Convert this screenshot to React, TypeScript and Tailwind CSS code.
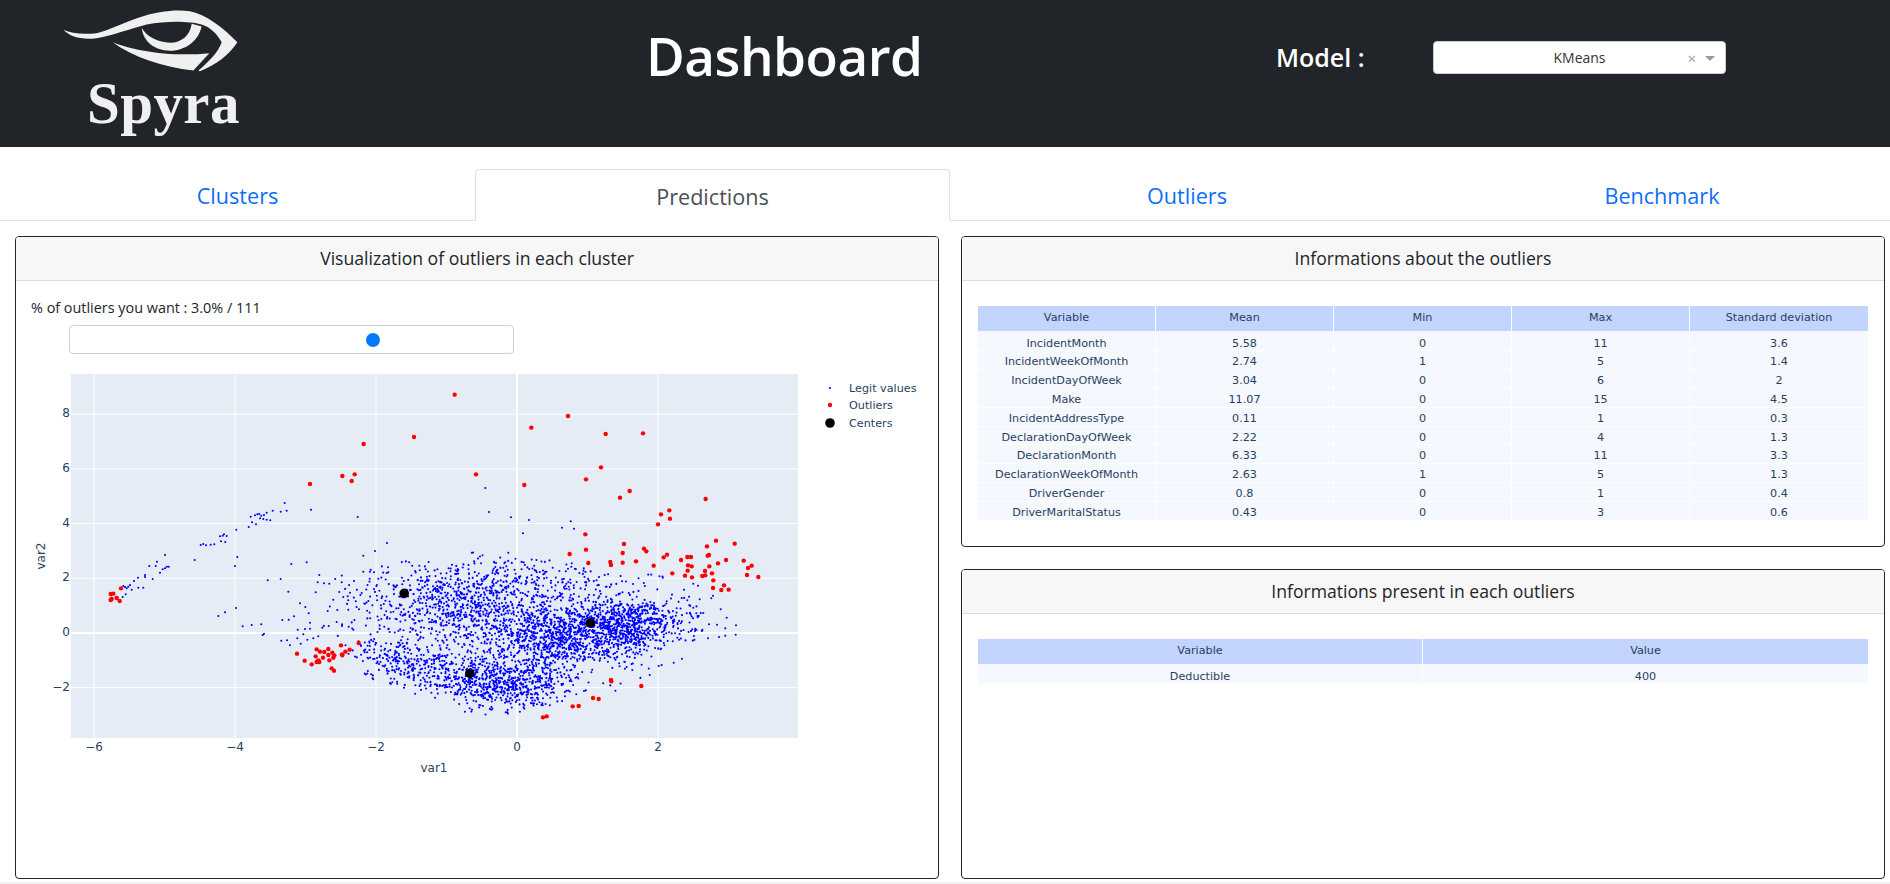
import React from "react";

const sans = "font-['Open_Sans',sans-serif]";

function rng(seed: number) {
  let s = seed >>> 0;
  return () => {
    s = (s + 0x6d2b79f5) >>> 0;
    let t = s;
    t = Math.imul(t ^ (t >>> 15), t | 1);
    t ^= t + Math.imul(t ^ (t >>> 7), t | 61);
    return ((t ^ (t >>> 14)) >>> 0) / 4294967296;
  };
}

const X0 = 517;
const Y0 = 632;
const SX = 70.5;
const SY = 27.35;
const OX = 71;
const OY = 373;
const px = (x: number) => X0 + x * SX - OX;
const py = (y: number) => Y0 - y * SY - OY;

const leftReds = [[1184,101],[1062,228],[911,249],[1248,340],[847,345],[884,340],[875,360],[750,369],[183,682],[152,699],[160,698],[170,711],[152,717],[155,714],[179,720],[711,878],[734,899],[755,910],[770,865],[780,872],[793,873],[805,864],[767,886],[805,882],[817,875],[823,883],[820,890],[808,898],[789,890],[770,903],[775,898],[778,903],[843,853],[846,880],[847,883],[856,872],[869,866],[896,846],[815,922],[822,929]];
const rightReds = [[204,165],[94,200],[317,219],[429,217],[303,319],[258,355],[73,372],[389,390],[360,410],[617,414],[508,448],[483,460],[510,473],[474,490],[256,520],[372,549],[648,539],[621,556],[704,548],[432,563],[439,571],[258,566],[209,579],[368,576],[501,581],[491,589],[562,588],[573,588],[627,582],[623,584],[543,597],[678,597],[731,599],[408,601],[331,603],[333,612],[368,605],[265,606],[654,607],[564,613],[575,616],[628,616],[461,614],[755,614],[744,621],[563,629],[615,630],[517,637],[636,637],[741,642],[555,644],[607,645],[616,643],[576,649],[775,648],[640,658],[672,673],[639,681],[664,687],[686,686],[333,957],[334,961],[424,975],[279,1011],[296,1014],[218,1036],[236,1035],[140,1066],[129,1069]];
const leftBlue = [[315,582],[291,602],[268,615],[287,615],[255,642],[255,648],[234,650],[222,660],[210,672],[205,677],[200,682],[195,678],[190,675],[197,700],[188,708],[215,686],[235,680],[250,680],[278,654],[300,635],[308,625],[315,622],[320,617],[326,617],[404,597],[422,552],[430,549],[438,553],[452,551],[463,550],[483,541],[492,520],[480,526],[488,524],[500,525],[496,543],[529,506],[566,498],[576,484],[588,490],[572,467],[585,463],[592,460],[598,459],[604,464],[612,462],[620,455],[600,472],[610,474],[620,476],[631,478],[638,449],[662,452],[674,426],[680,449],[753,446],[893,468],[1276,381],[1287,453],[525,615],[532,588],[694,609],[740,604],[623,658],[662,654],[685,692],[475,765],[495,754],[528,741],[548,796],[575,792],[604,790],[608,822],[612,818],[720,727],[736,738],[746,757],[667,777],[686,776],[702,766],[664,839],[681,838],[690,853],[981,546],[945,570],[910,584],[778,642],[773,664],[792,667],[808,668],[767,694],[803,750],[832,747],[750,785],[787,800],[806,795],[830,783],[846,795],[713,806],[735,804],[750,803],[730,820],[712,832],[722,848],[742,836],[760,832],[775,826],[820,716],[850,708],[865,718],[838,693],[870,695],[882,660],[845,664],[910,632],[932,626],[942,634]];
const rightBlue = [[33,469],[87,477],[69,517],[186,500],[212,481],[222,503],[25,575],[66,603],[214,617],[158,620],[708,793],[707,821],[680,770],[662,745],[676,802],[676,824],[657,828],[651,791],[627,790],[624,832],[546,893],[521,905],[476,915],[449,942],[397,927],[252,990],[229,1000],[594,674],[580,668],[552,686],[634,712],[639,704],[599,715],[610,756],[593,769],[568,732],[580,740]];

const reds = [
  ...leftReds.map(([a, b]) => [60 + a / 3 - OX, 360 + b / 3 - OY]),
  ...rightReds.map(([a, b]) => [500 + a / 3 - OX, 360 + b / 3 - OY]),
];

function blueDots(): string {
  const r = rng(4242);
  const gauss = () => {
    const u = Math.max(r(), 1e-6);
    return Math.sqrt(-2 * Math.log(u)) * Math.cos(2 * Math.PI * r());
  };
  let d = "";
  const add = (x: number, y: number) => {
    d += `M${x.toFixed(1)} ${y.toFixed(1)}h0`;
  };
  leftBlue.forEach(([a, b]) => add(60 + a / 3 - OX, 360 + b / 3 - OY));
  rightBlue.forEach(([a, b]) => add(500 + a / 3 - OX, 360 + b / 3 - OY));
  const keep = (x: number, y: number) => {
    if (x < -2.75 || x > 2.65) return false;
    const top = 3.0 - 0.35 * Math.abs(x + 0.5);
    const bot = -3.0 + Math.max(0, (x - 0.3) * 0.75) + Math.max(0, (-0.9 - x) * 1.05);
    if (y > top || y < bot) return false;
    if (x > 2.1 && (y > 1.5 || y < -0.3)) return false;
    return true;
  };
  const groups: [number, number, number, number, number][] = [
    [1150, 0.85, -0.05, 0.68, 0.55],
    [850, -0.7, 0.95, 0.75, 0.75],
    [430, 1.7, 0.45, 0.4, 0.5],
    [300, 0, 1.95, 1.05, 0.55],
    [230, 0.2, -1.25, 0.5, 0.65],
    [230, -0.3, -1.95, 0.45, 0.48],
  ];
  for (const [n, cx, cy, sx, sy] of groups) {
    for (let i = 0; i < n; i++) {
      const x = cx + gauss() * sx;
      const y = cy + gauss() * sy;
      if (keep(x, y)) add(px(x), py(y));
    }
  }
  for (let i = 0; i < 660; i++) {
    const t = r();
    const x = -2.2 + 2.6 * t + gauss() * 0.18;
    const y = -0.8 - 1.25 * t + gauss() * 0.45;
    if (keep(x, y)) add(px(x), py(y));
  }
  return d;
}

function Scatter() {
  const W = 727;
  const H = 364;
  const xt = [-6, -4, -2, 0, 2];
  const yt = [-2, 0, 2, 4, 6, 8];
  const lab = "#2a3f5f";
  const font = "'DejaVu Sans', sans-serif";
  const dots = React.useMemo(blueDots, []);
  return (
    <svg width={895} height={430} viewBox="-40 -13 895 430" className="block">
      <rect x={0} y={0} width={W} height={H} fill="#e5ecf6" />
      {xt.map((t) => (
        <line key={t} x1={px(t)} x2={px(t)} y1={0} y2={H} stroke="#fff" strokeWidth={t === 0 ? 2 : 1} />
      ))}
      {yt.map((t) => (
        <line key={t} x1={0} x2={W} y1={py(t)} y2={py(t)} stroke="#fff" strokeWidth={t === 0 ? 2 : 1} />
      ))}
      <path d={dots} stroke="#0000ff" strokeWidth={2.1} strokeLinecap="round" fill="none" />
      {reds.map(([x, y], i) => (
        <circle key={i} cx={x} cy={y} r={2.2} fill="#ff0000" />
      ))}
      {[[-1.6, 1.45], [-0.67, -1.48], [1.04, 0.36]].map(([x, y], i) => (
        <circle key={i} cx={px(x)} cy={py(y)} r={4.8} fill="#000" />
      ))}
      {xt.map((t) => (
        <text key={t} x={px(t)} y={H + 13} textAnchor="middle" fontSize={12} fontFamily={font} fill={lab}>
          {t < 0 ? `\u2212${-t}` : t}
        </text>
      ))}
      {yt.map((t) => (
        <text key={t} x={-1} y={py(t) + 3} textAnchor="end" fontSize={12} fontFamily={font} fill={lab}>
          {t < 0 ? `\u2212${-t}` : t}
        </text>
      ))}
      <text x={363} y={H + 34} textAnchor="middle" fontSize={12} fontFamily={font} fill={lab}>var1</text>
      <text transform="translate(-26 182) rotate(-90)" textAnchor="middle" fontSize={12} fontFamily={font} fill={lab}>var2</text>
      {[
        { t: "Legit values", y: 14, r: 1.1, c: "#0000ff" },
        { t: "Outliers", y: 31, r: 2.2, c: "#ff0000" },
        { t: "Centers", y: 49, r: 4.8, c: "#000" },
      ].map((l) => (
        <g key={l.t}>
          <circle cx={759} cy={l.y} r={l.r} fill={l.c} />
          <text x={778} y={l.y + 3.5} fontSize={11.2} fontFamily={font} fill={lab}>{l.t}</text>
        </g>
      ))}
    </svg>
  );
}

function Logo() {
  return (
    <div className="pt-[7px]">
      <svg width={180} height={67} viewBox="180 20 540 200" className="block">
        <path fill="#f0f0f0" d="M190 88 C215 100 250 102 290 98 C330 88 380 62 420 50 C470 32 530 26 570 32 C620 42 670 82 712 125 C690 160 650 192 600 212 L595 210 C625 185 655 155 665 125 C650 98 630 80 605 72 C570 62 500 60 440 72 C390 84 340 105 290 113 C250 119 210 110 190 88 Z" />
        <path fill="#f0f0f0" d="M425 82 C440 110 475 125 510 127 C545 127 570 105 575 70 L605 78 C595 120 560 150 510 151 C465 150 430 125 425 82 Z" />
        <path fill="#f0f0f0" d="M338 125 C400 150 510 170 628 158 L580 210 C490 200 400 170 338 125 Z" />
      </svg>
      <div className="font-['Liberation_Serif',serif] font-bold text-[59px] leading-[52px] text-[#f0f0f0] mt-[3px] ml-[27px] tracking-[0.4px]">Spyra</div>
    </div>
  );
}

function PlotTable({ cols, rows }: { cols: string[]; rows: (string | number)[][] }) {
  const tplt = cols.length === 5 ? "grid-cols-5" : "grid-cols-2";
  return (
    <div className="font-['DejaVu_Sans',sans-serif] text-[11.2px] text-[#2a3f5f] w-[890px]">
      <div className={`grid ${tplt} bg-[#c2d4ff] h-[25px] text-center`}>
        {cols.map((c, i) => (
          <div key={c} className={`h-full leading-[23px] ${i < cols.length - 1 ? "border-r border-white" : ""}`}>{c}</div>
        ))}
      </div>
      {rows.map((row, j) => (
        <div key={j} className={`grid ${tplt} bg-[#f5f8ff] text-center ${j ? "h-[18.9px] border-t border-white" : "h-[19px]"}`}>
          {row.map((c, i) => (
            <div key={i} className={`${j === 0 ? "pt-[3px] leading-[19px]" : "leading-[21px]"} ${i < row.length - 1 ? "border-r border-white" : ""}`}>{c}</div>
          ))}
        </div>
      ))}
    </div>
  );
}

function Card({ title, className, children }: { title: string; className?: string; children: React.ReactNode }) {
  return (
    <div className={`border border-[#212529] rounded-[4px] overflow-hidden bg-white flex flex-col ${className ?? ""}`}>
      <div className="h-[44px] shrink-0 bg-[#f7f7f7] border-b border-[#dcdcdc] flex items-center justify-center text-[17.6px] text-[#212529]">
        {title}
      </div>
      <div className="flex-1 min-h-0">{children}</div>
    </div>
  );
}

const stats: (string | number)[][] = [
  ["IncidentMonth", "5.58", "0", "11", "3.6"],
  ["IncidentWeekOfMonth", "2.74", "1", "5", "1.4"],
  ["IncidentDayOfWeek", "3.04", "0", "6", "2"],
  ["Make", "11.07", "0", "15", "4.5"],
  ["IncidentAddressType", "0.11", "0", "1", "0.3"],
  ["DeclarationDayOfWeek", "2.22", "0", "4", "1.3"],
  ["DeclarationMonth", "6.33", "0", "11", "3.3"],
  ["DeclarationWeekOfMonth", "2.63", "1", "5", "1.3"],
  ["DriverGender", "0.8", "0", "1", "0.4"],
  ["DriverMaritalStatus", "0.43", "0", "3", "0.6"],
];

export default function App() {
  return (
    <div className={`${sans} w-[1890px] h-[884px] overflow-hidden bg-white flex flex-col`}>
      <header className="h-[147px] shrink-0 bg-[#212529] flex items-start text-white">
        <div className="pl-[60px] w-[646px] shrink-0"><Logo /></div>
        <div className="w-[630px] shrink-0 text-[53px] tracking-[-0.5px] leading-[76px] font-semibold pt-[18px]">Dashboard</div>
        <div className="w-[157px] shrink-0 text-[25px] font-semibold leading-[32px] pt-[41px]">Model :</div>
        <div className="mt-[41px] w-[293px] h-[33px] bg-white rounded-[4px] border border-[#cccccc] flex items-center relative text-[#333] text-[14px]">
          <div className="w-full text-center">KMeans</div>
          <span className="absolute right-[29px] top-[7px] text-[#999] text-[15px] leading-[18px]">×</span>
          <span className="absolute right-[10px] top-[14px] w-0 h-0 border-x-[5px] border-x-transparent border-t-[5px] border-t-[#999]" />
        </div>
      </header>

      <nav className="h-[74px] shrink-0 flex items-end border-b border-[#dee2e6] text-[21.6px] text-[#0d6efd] overflow-x-clip">
        <div className="w-[475px] h-[52px] pt-[4px] shrink-0 flex items-center justify-center">Clusters</div>
        <div className="w-[475px] h-[52px] pt-[4px] shrink-0 mb-[-1px] bg-white border border-[#dee2e6] border-b-white rounded-t-[4px] flex items-center justify-center text-[#495057]">Predictions</div>
        <div className="w-[474px] h-[52px] pt-[4px] shrink-0 flex items-center justify-center">Outliers</div>
        <div className="w-[476px] h-[52px] pt-[4px] shrink-0 flex items-center justify-center">Benchmark</div>
      </nav>

      <main className="flex gap-[22px] pl-[15px] pt-[15px]">
        <Card title="Visualization of outliers in each cluster" className="w-[924px] h-[643px]">
          <div className="pl-[15px] pt-[17px]">
            <div className="text-[14.4px] leading-[20px] text-[#212529]">% of outliers you want : 3.0% / 111</div>
            <div className="ml-[38px] mt-[7px] w-[445px] h-[29px] border border-[#d0d0d0] rounded-[4px] relative">
              <span className="absolute left-[296px] top-[7px] w-[14px] h-[14px] rounded-full bg-[#007bff]" />
            </div>
            <div className="mt-[7px]"><Scatter /></div>
          </div>
        </Card>
        <div className="w-[924px] flex flex-col gap-[22px]">
          <Card title="Informations about the outliers" className="h-[311px]">
            <div className="pt-[25px] pl-[16px]">
              <PlotTable cols={["Variable", "Mean", "Min", "Max", "Standard deviation"]} rows={stats} />
            </div>
          </Card>
          <Card title="Informations present in each outliers" className="h-[310px]">
            <div className="pt-[25px] pl-[16px]">
              <PlotTable cols={["Variable", "Value"]} rows={[["Deductible", "400"]]} />
            </div>
          </Card>
        </div>
      </main>
      <div className="mt-[3px] h-[2px] bg-[#f0f0f0]" />
    </div>
  );
}
